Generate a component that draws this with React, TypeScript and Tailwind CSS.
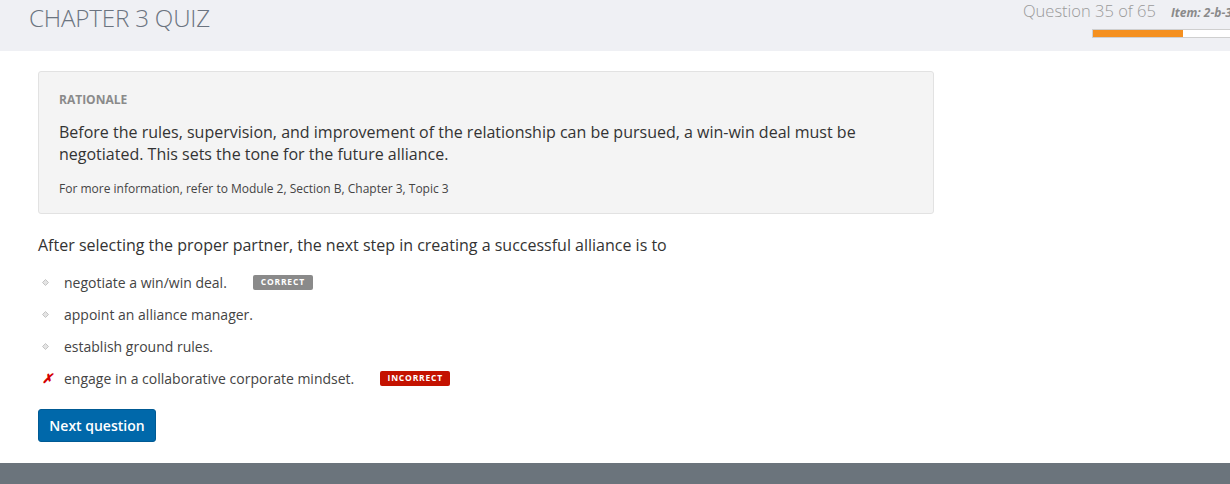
import React from "react";

const options = [
  { text: "negotiate a win/win deal.", badge: "CORRECT", mark: "dot" },
  { text: "appoint an alliance manager.", mark: "dot" },
  { text: "establish ground rules.", mark: "dot" },
  { text: "engage in a collaborative corporate mindset.", badge: "INCORRECT", mark: "x" },
];

export default function App() {
  return (
    <div className="w-[1230px] h-[484px] bg-white flex flex-col overflow-hidden" style={{ fontFamily: '"Open Sans", sans-serif' }}>
      <header className="h-[51px] shrink-0 bg-[#eff0f4] flex justify-between">
        <h1 className="pl-[29px] pt-[1px] text-[24.2px] font-light text-[#6b7480] leading-[34px] tracking-[-0.2px]">CHAPTER 3 QUIZ</h1>
        <div className="w-[207px] flex flex-col overflow-hidden">
          <div className="flex items-baseline whitespace-nowrap">
            <span className="text-[16.5px] font-light text-[#9a9a9a] leading-[22px]">Question 35 of 65</span>
            <span className="ml-[15px] text-[12px] font-bold italic text-[#8a8a8a]">Item: 2-b-3</span>
          </div>
          <div className="mt-[7px] ml-[69px] w-[140px] shrink-0 h-[9px] border border-[#cfcfcf] bg-white flex">
            <div className="w-[90px] h-full bg-[#f5901f]" />
          </div>
        </div>
      </header>
      <main className="flex-1 px-[38px] pt-[20px]">
        <div className="w-[896px] h-[143px] bg-[#f4f4f4] border border-[#e2e2e2] rounded-[3px] px-[20px] pt-[19px]">
          <div className="text-[12px] font-bold text-[#8a8a8a] leading-[17px]">RATIONALE</div>
          <p className="mt-[13px] text-[16px] leading-[22px] text-[#333]">
            Before the rules, supervision, and improvement of the relationship can be pursued, a win-win deal must be
            <br />
            negotiated. This sets the tone for the future alliance.
          </p>
          <p className="mt-[15px] text-[12px] leading-[17px] text-[#444]">
            For more information, refer to Module 2, Section B, Chapter 3, Topic 3
          </p>
        </div>
        <p className="mt-[20px] text-[16px] leading-[22px] text-[#333]">
          After selecting the proper partner, the next step in creating a successful alliance is to
        </p>
        <ul className="mt-[16px] flex flex-col gap-[12px]">
          {options.map((o) => (
            <li key={o.text} className="flex items-center h-[20px] text-[14px] text-[#444]">
              <span className="w-[26px] flex justify-start pl-[4px]">
                {o.mark === "dot" ? (
                  <svg width="7" height="7" viewBox="0 0 7 7">
                    <path d="M3.5 0.5 L6.5 3.5 L3.5 6.5 L0.5 3.5 Z" fill="#e4e4e4" stroke="#c4c4c4" strokeWidth="1" />
                  </svg>
                ) : (
                  <span className="text-[#d40000] text-[13px] font-bold italic leading-none">✗</span>
                )}
              </span>
              <span>{o.text}</span>
              {o.badge && (
                <span
                  className={`ml-[26px] h-[15px] flex items-center justify-center text-[8.5px] font-bold tracking-[0.8px] text-white rounded-[2px] ${
                    o.badge === "CORRECT" ? "w-[60px] bg-[#8a8a8a]" : "w-[70px] bg-[#c41200]"
                  }`}
                >
                  {o.badge}
                </span>
              )}
            </li>
          ))}
        </ul>
        <button className="mt-[21px] w-[118px] h-[33px] rounded-[3px] bg-[#0068aa] border border-[#005a94] text-white text-[14px] font-semibold">
          Next question
        </button>
      </main>
      <footer className="h-[21px] shrink-0 bg-[#6b747c]" />
    </div>
  );
}
